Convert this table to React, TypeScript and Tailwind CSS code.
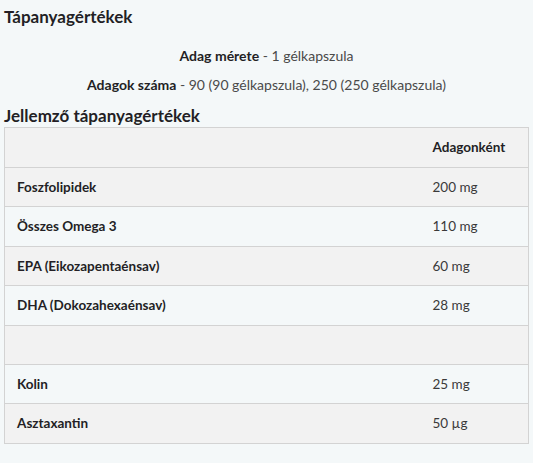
const rows: Array<[string, string]> = [
    ["Foszfolipidek", "200 mg"],
    ["Összes Omega 3", "110 mg"],
    ["EPA (Eikozapentaénsav)", "60 mg"],
    ["DHA (Dokozahexaénsav)", "28 mg"],
    ["", ""],
    ["Kolin", "25 mg"],
    ["Asztaxantin", "50 µg"],
]

export default function App() {
    return (
        <div className="min-h-[463px] bg-[#f4f8f9] px-1 pt-[7px] text-[#231f25]" style={{ fontFamily: "Lato, 'Open Sans', sans-serif" }}>
            <h2 className="text-[17px] font-bold leading-5">Tápanyagértékek</h2>
            <div className="mt-[19px] flex flex-col items-center gap-[9px] text-[14px] leading-5">
                <p><span className="font-bold">Adag mérete</span> <span className="text-[#4a4a4a]">- 1 gélkapszula</span></p>
                <p><span className="font-bold">Adagok száma</span> <span className="text-[#4a4a4a]">- 90 (90 gélkapszula), 250 (250 gélkapszula)</span></p>
            </div>
            <h3 className="mt-[11px] text-[17px] font-bold leading-5">Jellemző tápanyagértékek</h3>
            <table className="mt-[1px] w-[525px] border-collapse border border-[#d3d3d3] text-[13.5px]">
                <thead>
                    <tr className="h-10 bg-[#f2f2f2]">
                        <th className="border-b border-[#d3d3d3] px-3"></th>
                        <th className="w-[96px] border-b border-[#d3d3d3] text-left font-bold">Adagonként</th>
                    </tr>
                </thead>
                <tbody>
                    {rows.map(([name, value], index) => (
                        <tr key={index} className={`h-[39.4px] ${index % 2 === 0 ? "bg-[#f2f2f2]" : "bg-[#f4f8f9]"}`}>
                            <td className="border-b border-[#d3d3d3] px-3 font-bold">{name}</td>
                            <td className="border-b border-[#d3d3d3] text-[#3a3a3a]">{value}</td>
                        </tr>
                    ))}
                </tbody>
            </table>
        </div>
    )
}
